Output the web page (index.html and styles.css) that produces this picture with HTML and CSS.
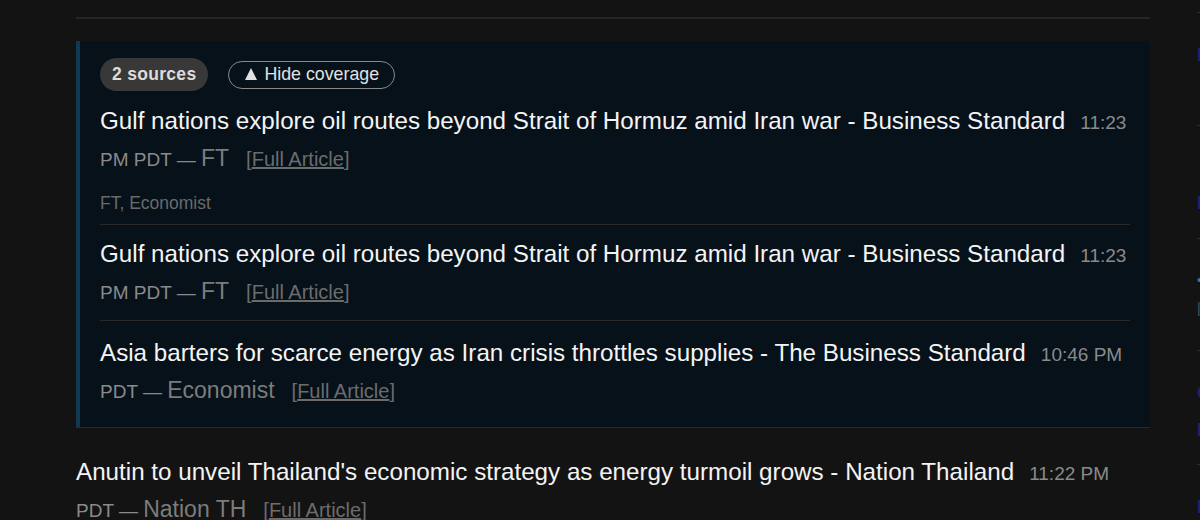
FILE: index.html
```html
<!DOCTYPE html>
<html lang="en">
<head>
<meta charset="utf-8">
<title>News feed</title>
<link rel="stylesheet" href="styles.css">
</head>
<body>
<div class="page">
  <main class="feed">
    <div class="prev"></div>
    <section class="coverage">
      <div class="cov-controls">
        <span class="pill">2 sources</span>
        <button class="hide" type="button"><span class="tri">▲</span>Hide coverage</button>
      </div>
      <article class="item first">
        <p class="line"><a class="title" href="#">Gulf nations explore oil routes beyond Strait of Hormuz amid Iran war - Business Standard</a><span class="time">11:23 PM PDT — </span><span class="src">FT</span><span class="full">[<a href="#">Full Article</a>]</span></p>
        <div class="also">FT, Economist</div>
      </article>
      <article class="item second">
        <p class="line"><a class="title" href="#">Gulf nations explore oil routes beyond Strait of Hormuz amid Iran war - Business Standard</a><span class="time">11:23 PM PDT — </span><span class="src">FT</span><span class="full">[<a href="#">Full Article</a>]</span></p>
      </article>
      <article class="item last">
        <p class="line"><a class="title" href="#">Asia barters for scarce energy as Iran crisis throttles supplies - The Business Standard</a><span class="time">10:46 PM PDT — </span><span class="src">Economist</span><span class="full">[<a href="#">Full Article</a>]</span></p>
      </article>
    </section>
    <article class="item outer">
      <p class="line"><a class="title" href="#">Anutin to unveil Thailand's economic strategy as energy turmoil grows - Nation Thailand</a><span class="time">11:22 PM PDT — </span><span class="src">Nation TH</span><span class="full">[<a href="#">Full Article</a>]</span></p>
    </article>
  </main>
  <aside class="side">
    <div class="s-item s1"><a href="#">Markets</a></div>
    <div class="s-item s2"><a href="#">Brent</a></div>
    <div class="s-item s3"><span class="s-blue">•</span><span class="s-grey">|</span></div>
    <div class="s-item s4"><a href="#">Oil</a><a href="#">Iran</a></div>
    <div class="s-item s5"><a href="#">Nation</a></div>
  </aside>
</div>
</body>
</html>
```

FILE: styles.css
```css
* { box-sizing: border-box; }

html, body {
  margin: 0;
  padding: 0;
  background: #131313;
  height: 520px;
  overflow: hidden;
}

body {
  font-family: "Liberation Sans", Arial, sans-serif;
  color: #f2f2f2;
}

.page {
  display: flex;
  gap: 47px;
  padding-left: 76px;
  width: 1500px;
}

.feed {
  width: 1074px;
  flex: none;
}

.prev {
  height: 19px;
  border-bottom: 2px solid #262626;
}

.coverage {
  margin-top: 22px;
  background: #06111a;
  border-left: 4px solid #0f3a50;
  border-bottom: 1px solid #262a2c;
  padding: 16px 20px 9px 20px;
}

.cov-controls {
  display: flex;
  align-items: center;
  gap: 20px;
  height: 35px;
}

.pill {
  display: inline-flex;
  align-items: center;
  height: 33px;
  padding: 0 12px;
  border-radius: 17px;
  background: #383838;
  color: #dcdcdc;
  font-weight: bold;
  font-size: 17.5px;
  letter-spacing: 0.3px;
}

.hide {
  display: inline-flex;
  align-items: center;
  height: 28px;
  padding: 0 15px 0 16px;
  border: 1px solid #8a8a8a;
  border-radius: 14px;
  background: transparent;
  color: #e2e2e2;
  font-family: "Liberation Sans", Arial, sans-serif;
  font-size: 17.8px;
}

.tri {
  display: inline-block;
  width: 0;
  height: 0;
  border-left: 6.5px solid transparent;
  border-right: 6.5px solid transparent;
  border-bottom: 12px solid #e2e2e2;
  font-size: 0;
  margin-right: 7px;
  margin-top: -1px;
}

.item {
  padding: 10px 0;
  border-bottom: 1px solid #2a2a2a;
}

.item.first {
  padding: 10px 0 9px;
}

.item.second {
  padding: 10px 0 11px;
}

.item.last {
  border-bottom: none;
  padding: 13px 0 10px;
}

.line {
  margin: 0;
  font-size: 24.2px;
  line-height: 37px;
}

.line span {
  line-height: 1;
}

.title {
  color: #f4f4f4;
  text-decoration: none;
}

.time {
  color: #8a8a8a;
  font-size: 19px;
  margin-left: 15px;
}

.src {
  color: #7c7c7c;
  font-size: 23px;
}

.full {
  color: #6c6c6c;
  font-size: 20px;
  margin-left: 17px;
}

.full a {
  color: #6c6c6c;
  text-decoration: underline;
}

.also {
  margin-top: 15px;
  font-size: 17.5px;
  line-height: 24px;
  color: #6a6a6a;
}

.item.outer {
  margin-top: 15px;
  padding-top: 10px;
  border-bottom: none;
}

.side {
  width: 300px;
  flex: none;
}

.s-item {
  border-top: 1px solid #2d2d2d;
  font-size: 19px;
  line-height: 19px;
}

.s-item a {
  display: block;
  color: #22207a;
  text-decoration: none;
  font-weight: bold;
}

.s1 { margin-top: 12px; height: 113px; padding-top: 32px; }
.s2 { height: 113px; padding-top: 67px; }
.s3 { height: 112px; padding-top: 34px; }
.s4 { height: 114px; padding-top: 32px; }
.s4 a + a { margin-top: 18px; }
.s5 { padding-top: 32px; }

.s-blue {
  display: block;
  color: #3a6fb0;
  font-size: 14px;
  line-height: 14px;
}

.s-grey {
  display: block;
  margin-top: 12px;
  color: #4a5560;
  font-size: 14px;
}
```
